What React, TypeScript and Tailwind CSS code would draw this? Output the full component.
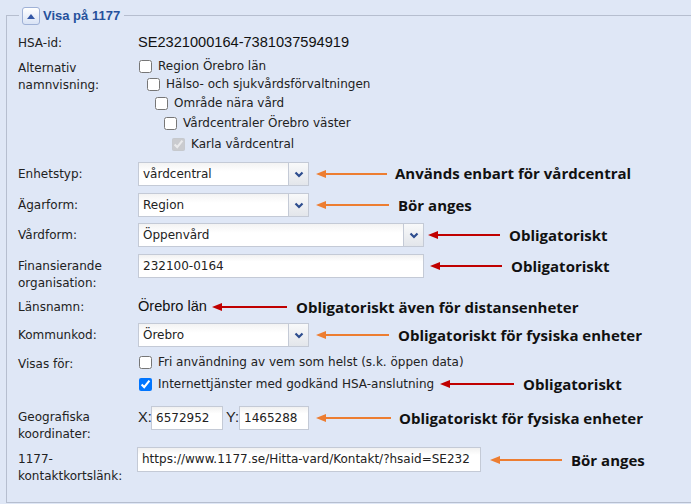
import React from 'react';

const ORANGE = '#ed7d31';
const RED = '#c00000';

const txt = "font-['DejaVu_Sans',sans-serif] text-[12px] leading-[17px] text-[#222]";
const note = "font-['Open_Sans',sans-serif] font-bold text-[15px] leading-[20px] text-[#111] whitespace-nowrap";

function Arrow({ color, width = 72 }: { color: string; width?: number }) {
  return (
    <svg width={width} height="10" viewBox={`0 0 ${width} 10`} className="shrink-0">
      <path d={`M8 5 H${width}`} stroke={color} strokeWidth="2" />
      <path d="M0 5 L10 1 L10 9 Z" fill={color} />
    </svg>
  );
}

function Callout({ color, text, arrowGap, textGap = 8, width = 72, shift = 0 }: {
  color: string; text: string; arrowGap: string; textGap?: number; width?: number; shift?: number;
}) {
  return (
    <div className={`flex items-center ${arrowGap}`}>
      <Arrow color={color} width={width} />
      <span className={`${note} ${textGap === 9 ? 'ml-[9px]' : 'ml-[8px]'} ${shift ? '-mt-[3px]' : ''}`}>{text}</span>
    </div>
  );
}

function Chevron() {
  return (
    <svg width="10" height="7" viewBox="0 0 10 7">
      <path d="M1.5 1.5 L5 5 L8.5 1.5" fill="none" stroke="#2d4d8e" strokeWidth="2.2" />
    </svg>
  );
}

function Select({ value, className }: { value: string; className: string }) {
  return (
    <div className={`flex h-[24px] shrink-0 border border-[#c4cad6] bg-white ${className}`}>
      <div className={`flex flex-1 items-center pl-[4px] ${txt} text-[#111] bg-linear-to-b from-[#f3f3f3] to-white to-40%`}>
        {value}
      </div>
      <div className="flex w-[20px] items-center justify-center border-l border-[#c4cad6] bg-linear-to-b from-[#f8f9fa] to-[#e3e6eb]">
        <Chevron />
      </div>
    </div>
  );
}

function Input({ value, className }: { value: string; className: string }) {
  return (
    <div
      className={`flex shrink-0 items-center overflow-hidden whitespace-nowrap border border-[#c4cad6] bg-linear-to-b from-[#f1f1f1] to-white to-30% pl-[4px] ${txt} text-[#111] ${className}`}
    >
      {value}
    </div>
  );
}

function Check({ label, checked = false, disabled = false, className = '' }: {
  label: string; checked?: boolean; disabled?: boolean; className?: string;
}) {
  return (
    <label className={`flex items-center gap-[6px] ${className}`}>
      <input type="checkbox" defaultChecked={checked} disabled={disabled} className="m-0 h-[13px] w-[13px]" />
      <span className={`${txt} ${disabled ? 'text-[#9b9b9b]' : ''} whitespace-nowrap`}>{label}</span>
    </label>
  );
}

export default function App() {
  return (
    <div className="h-[504px] w-[691px] overflow-hidden bg-[#dfe7f6] pt-[15px] pl-[6px]">
      <div className="relative h-[488px] w-[720px] border border-[#b6becf] pl-[11px]">
        {/* legend */}
        <div className="absolute -top-[9px] left-[12px] flex h-[18px] items-center gap-[3px] bg-[#dfe7f6] px-[3px] pr-[4px]">
          <div className="flex h-[18px] w-[18px] items-center justify-center rounded-[3px] border border-[#9fb1d6] bg-linear-to-b from-white to-[#d9e3f5]">
            <svg width="8" height="5" viewBox="0 0 8 5">
              <path d="M0 5 L4 0 L8 5 Z" fill="#3457a6" />
            </svg>
          </div>
          <span className="font-['Liberation_Sans',Arial,sans-serif] text-[13px] font-bold text-[#26519c]">Visa på 1177</span>
        </div>

        {/* HSA-id */}
        <div className="mt-[18px] flex h-[18px] items-center">
          <div className={`w-[120px] shrink-0 ${txt}`}>HSA-id:</div>
          <div className="font-['Liberation_Sans',Arial,sans-serif] text-[14.6px] text-[#111]">SE2321000164-7381037594919</div>
        </div>

        {/* Alternativ namnvisning */}
        <div className="mt-[5px] flex">
          <div className={`w-[120px] shrink-0 pt-[3px] ${txt}`}>
            Alternativ
            <br />
            namnvisning:
          </div>
          <div className="flex flex-col">
            <Check className="h-[18px] pl-[1px]" label="Region Örebro län" />
            <Check className="h-[18px] pl-[9px]" label="Hälso- och sjukvårdsförvaltningen" />
            <Check className="h-[20px] pl-[17px]" label="Område nära vård" />
            <Check className="h-[21px] pl-[26px]" label="Vårdcentraler Örebro väster" />
            <Check className="h-[21px] pl-[34px]" label="Karla vårdcentral" checked disabled />
          </div>
        </div>

        {/* Enhetstyp */}
        <div className="mt-[7px] flex items-center">
          <div className={`w-[120px] shrink-0 ${txt}`}>Enhetstyp:</div>
          <Select value="vårdcentral" className="w-[171px]" />
          <Callout color={ORANGE} text="Används enbart för vårdcentral" arrowGap="ml-[7px]" width={71} shift={1} />
        </div>

        {/* Ägarform */}
        <div className="mt-[7px] flex items-center">
          <div className={`w-[120px] shrink-0 ${txt}`}>Ägarform:</div>
          <Select value="Region" className="w-[171px]" />
          <Callout color={ORANGE} text="Bör anges" arrowGap="ml-[7px]" width={73} textGap={9} />
        </div>

        {/* Vårdform */}
        <div className="mt-[6px] flex items-center">
          <div className={`w-[120px] shrink-0 ${txt}`}>Vårdform:</div>
          <Select value="Öppenvård" className="w-[286px]" />
          <Callout color={RED} text="Obligatoriskt" arrowGap="ml-[4px]" width={72} textGap={9} />
        </div>

        {/* Finansierande organisation */}
        <div className="mt-[7px] flex items-start">
          <div className={`w-[120px] shrink-0 pt-[4px] ${txt}`}>
            Finansierande
            <br />
            organisation:
          </div>
          <Input value="232100-0164" className="h-[24px] w-[286px]" />
          <div className="flex h-[24px] items-center">
            <Callout color={RED} text="Obligatoriskt" arrowGap="ml-[6px]" width={72} textGap={9} />
          </div>
        </div>

        {/* Länsnamn */}
        <div className="mt-[6px] flex h-[18px] items-center">
          <div className={`w-[120px] shrink-0 ${txt}`}>Länsnamn:</div>
          <div className="font-['Liberation_Sans',Arial,sans-serif] text-[14.6px] text-[#111]">Örebro län</div>
          <Callout color={RED} text="Obligatoriskt även för distansenheter" arrowGap="ml-[5px]" width={75} textGap={9} />
        </div>

        {/* Kommunkod */}
        <div className="mt-[7px] flex items-center">
          <div className={`w-[120px] shrink-0 ${txt}`}>Kommunkod:</div>
          <Select value="Örebro" className="w-[171px]" />
          <Callout color={ORANGE} text="Obligatoriskt för fysiska enheter" arrowGap="ml-[7px]" width={73} textGap={9} />
        </div>

        {/* Visas för */}
        <div className="mt-[5px] flex">
          <div className={`w-[120px] shrink-0 pt-[4px] ${txt}`}>Visas för:</div>
          <div className="flex flex-col">
            <Check className="h-[21px] pl-[1px]" label="Fri användning av vem som helst (s.k. öppen data)" />
            <div className="flex h-[22px] items-center">
              <Check className="pl-[1px]" label="Internettjänster med godkänd HSA-anslutning" checked />
              <Callout color={RED} text="Obligatoriskt" arrowGap="ml-[6px]" width={74} textGap={9} />
            </div>
          </div>
        </div>

        {/* Geografiska koordinater */}
        <div className="mt-[11px] flex items-start">
          <div className={`w-[120px] shrink-0 pt-[3px] ${txt}`}>
            Geografiska
            <br />
            koordinater:
          </div>
          <div className="flex h-[24px] items-center">
            <span className="w-[13px] font-['Liberation_Sans',Arial,sans-serif] text-[14.6px] text-[#222]">X:</span>
            <Input value="6572952" className="h-[24px] w-[72px]" />
            <span className="ml-[3px] w-[13px] font-['Liberation_Sans',Arial,sans-serif] text-[14.6px] text-[#222]">Y:</span>
            <Input value="1465288" className="h-[24px] w-[70px]" />
            <Callout color={ORANGE} text="Obligatoriskt för fysiska enheter" arrowGap="ml-[7px]" width={75} textGap={8} />
          </div>
        </div>

        {/* 1177-kontaktkortslänk */}
        <div className="mt-[4px] flex items-start">
          <div className={`w-[120px] shrink-0 pt-[4px] ${txt}`}>
            1177-
            <br />
            kontaktkortslänk:
          </div>
          <Input value="https://www.1177.se/Hitta-vard/Kontakt/?hsaid=SE232" className="-ml-[1px] h-[25px] w-[344px]" />
          <div className="flex h-[25px] items-center">
            <Callout color={ORANGE} text="Bör anges" arrowGap="ml-[9px]" width={72} textGap={9} />
          </div>
        </div>
      </div>
    </div>
  );
}
